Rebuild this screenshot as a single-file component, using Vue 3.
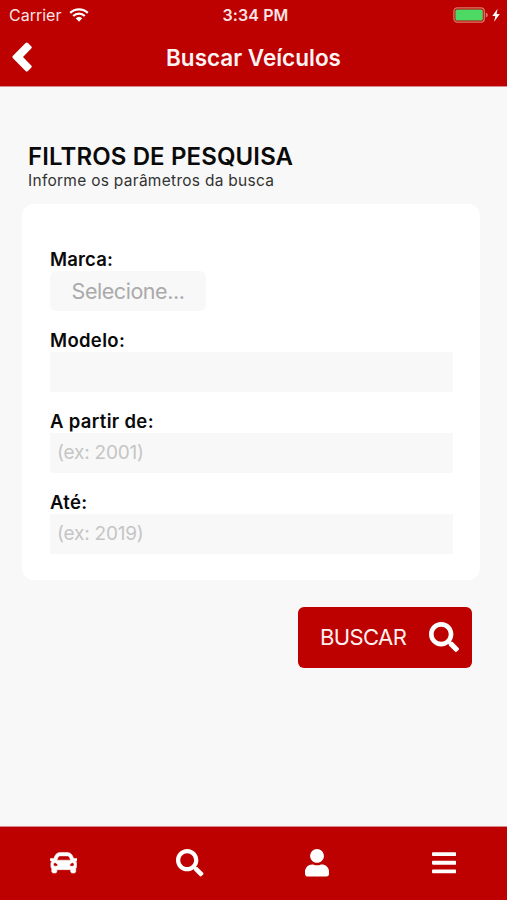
<template>
    <div class="page">
        <div class="status">
            <div class="status-left">
                <span class="carrier">Carrier</span>
                <svg class="wifi" viewBox="0 0 20 14">
                    <path d="M1.2 4.9a12.6 12.6 0 0 1 17.6 0M4.2 8a8.3 8.3 0 0 1 11.6 0" />
                    <path class="wifi-dot" d="M6.7 10.3a4.8 4.8 0 0 1 6.6 0L10 13.7z" />
                </svg>
            </div>
            <div class="clock">3:34 PM</div>
            <div class="status-right">
                <svg class="battery" viewBox="0 0 48 16">
                    <rect class="battery-border" x="0.9" y="0.9" width="30.4" height="14.2" rx="3.4" />
                    <rect class="battery-level" x="2.4" y="2.4" width="27.4" height="11.2" rx="1.6" />
                    <path class="battery-tip" d="M32.8 5.4c2.6 1 2.6 4.2 0 5.2z" />
                    <path class="bolt" d="M44.6 1.7l-5.3 7.4h3l-1.2 5.6 5.7-7.6h-3.2z" />
                </svg>
            </div>
        </div>
        <div class="head">
            <button class="back" aria-label="Voltar">
                <svg viewBox="0 0 20 30">
                    <path d="M2.2 15 14.8 2.2 18 5.4 8.6 15 18 24.6 14.8 27.8z" />
                </svg>
            </button>
            <h1 class="head-title">Buscar Veículos</h1>
        </div>

        <div class="content">
            <h2 class="title">FILTROS DE PESQUISA</h2>
            <div class="subtitle">Informe os parâmetros da busca</div>

            <div class="card">
                <div class="field">
                    <label class="label marca">Marca:</label>
                    <button class="select">Selecione...</button>
                </div>
                <div class="field" v-for="item in fields" :key="item.name">
                    <label :class="`label ${item.name}`" :for="item.name">{{ item.label }}</label>
                    <input class="input" :id="item.name" v-model="filter[item.name]" :placeholder="item.placeholder" />
                </div>
            </div>

            <button class="search">
                <span class="search-text">BUSCAR</span>
                <svg class="search-icon" viewBox="0 0 512 512">
                    <path :d="searchPath" />
                </svg>
            </button>
        </div>

        <div class="tabs">
            <div class="tab" v-for="tab in tabs" :key="tab.name">
                <svg :class="`tab-icon tab-${tab.name}`" :viewBox="tab.box">
                    <path :d="tab.path" />
                </svg>
            </div>
        </div>
    </div>
</template>

<script setup>

import {reactive} from "vue";

const searchPath = "M505 442.7L405.3 343c-4.5-4.5-10.6-7-17-7H372c27.6-35.3 44-79.7 44-128C416 93.1 322.9 0 208 0S0 93.1 0 208s93.1 208 208 208c48.3 0 92.7-16.4 128-44v16.3c0 6.4 2.5 12.5 7 17l99.7 99.7c9.4 9.4 24.6 9.4 33.9 0l28.3-28.3c9.4-9.4 9.4-24.6.1-34zM208 336c-70.7 0-128-57.2-128-128 0-70.7 57.2-128 128-128 70.7 0 128 57.2 128 128 0 70.7-57.2 128-128 128z"

const filter = reactive({
    modelo: "",
    inicio: "",
    fim: ""
})

const fields = [
    {name: "modelo", label: "Modelo:", placeholder: ""},
    {name: "inicio", label: "A partir de:", placeholder: "(ex: 2001)"},
    {name: "fim", label: "Até:", placeholder: "(ex: 2019)"}
]

const tabs = [
    {
        name: "car",
        box: "0 0 512 512",
        path: "M499.99 176h-59.87l-16.64-41.6C406.38 91.63 365.57 64 319.5 64h-127c-46.06 0-86.88 27.63-103.99 70.4L71.87 176H12.01C4.2 176-1.53 183.34.37 190.91l6 24C7.7 220.25 12.5 224 18.01 224h20.07C24.65 235.73 16 252.78 16 272v48c0 16.12 6.16 30.67 16 41.93V416c0 17.67 14.33 32 32 32h32c17.67 0 32-14.33 32-32v-32h256v32c0 17.67 14.33 32 32 32h32c17.67 0 32-14.33 32-32v-54.07c9.84-11.25 16-25.8 16-41.93v-48c0-19.22-8.65-36.27-22.07-48H494c5.51 0 10.31-3.75 11.64-9.09l6-24c1.89-7.57-3.84-14.91-11.65-14.91zm-352.06-17.83c7.29-18.22 24.94-30.17 44.57-30.17h127c19.63 0 37.28 11.95 44.57 30.17L384 208H128l19.93-49.83zM96 319.8c-19.2 0-32-12.76-32-31.9S76.8 256 96 256s48 28.71 48 47.85-28.8 15.95-48 15.95zm320 0c-19.2 0-48 3.19-48-15.95S396.8 256 416 256s32 12.76 32 31.9-12.8 31.9-32 31.9z"
    },
    {name: "search", box: "0 0 512 512", path: searchPath},
    {
        name: "user",
        box: "0 0 448 512",
        path: "M224 256c70.7 0 128-57.3 128-128S294.7 0 224 0 96 57.3 96 128s57.3 128 128 128zm89.6 32h-16.7c-22.2 10.2-46.9 16-72.9 16s-50.6-5.8-72.9-16h-16.7C60.2 288 0 348.2 0 422.4V464c0 26.5 21.5 48 48 48h352c26.5 0 48-21.5 48-48v-41.6c0-74.2-60.2-134.4-134.4-134.4z"
    },
    {
        name: "bars",
        box: "0 0 448 512",
        path: "M16 132h416c8.837 0 16-7.163 16-16V76c0-8.837-7.163-16-16-16H16C7.163 60 0 67.163 0 76v40c0 8.837 7.163 16 16 16zm0 160h416c8.837 0 16-7.163 16-16v-40c0-8.837-7.163-16-16-16H16c-8.837 0-16 7.163-16 16v40c0 8.837 7.163 16 16 16zm0 160h416c8.837 0 16-7.163 16-16v-40c0-8.837-7.163-16-16-16H16c-8.837 0-16 7.163-16 16v40c0 8.837 7.163 16 16 16z"
    }
]
</script>

<style>
body {
    margin: 0;
}
</style>

<style scoped>
.page {
    display: flex;
    flex-direction: column;
    height: 900px;
    background-color: #f8f8f8;
    font-family: Inter, "Liberation Sans", sans-serif;
    color: #0a0a0a;
}
button {
    border: 0;
    padding: 0;
    font-family: inherit;
}
.status {
    display: grid;
    grid-template-columns: 1fr auto 1fr;
    align-items: center;
    height: 30px;
    background-color: #bd0000;
    color: #fbe4e4;
}
.status-left {
    display: flex;
    align-items: center;
    padding-left: 9px;
}
.carrier {
    font-size: 16px;
    line-height: 30px;
}
.wifi {
    width: 20px;
    height: 14px;
    margin-left: 8px;
    fill: none;
    stroke: #fff;
    stroke-width: 2.3;
}
.wifi-dot {
    fill: #fff;
    stroke: none;
}
.clock {
    padding-left: 4px;
    font-size: 16px;
    font-weight: 600;
    letter-spacing: .1px;
    line-height: 30px;
}
.status-right {
    display: flex;
    justify-content: flex-end;
    padding-right: 6px;
}
.battery {
    width: 48px;
    height: 16px;
}
.battery-border {
    fill: none;
    stroke: #d9796c;
    stroke-width: 1.3;
}
.battery-level {
    fill: #4cd964;
}
.battery-tip {
    fill: #d9796c;
}
.bolt {
    fill: #fff;
}
.head {
    display: grid;
    grid-template-columns: 60px 1fr 60px;
    align-items: center;
    height: 56px;
    border-bottom: 1px solid #d98a8a;
    background-color: #bd0000;
}
.back {
    display: flex;
    padding: 0 0 2px 12px;
    background: none;
}
.back svg {
    width: 20px;
    height: 30px;
    fill: #fff;
    stroke: #fff;
    stroke-width: 3.4;
    stroke-linejoin: round;
}
.head-title {
    margin: 0;
    padding-bottom: 1px;
    text-align: center;
    font-size: 22.5px;
    font-weight: 600;
    line-height: 28px;
    color: #fff3f3;
}
.content {
    flex: 1;
    display: flex;
    flex-direction: column;
    padding: 56px 27px 0 22px;
}
.title {
    margin: 0 0 0 6px;
    font-size: 24px;
    font-weight: 600;
    letter-spacing: .12px;
    line-height: 28px;
}
.subtitle {
    margin-left: 6px;
    font-size: 15.5px;
    letter-spacing: .28px;
    line-height: 20px;
    color: #333;
}
.card {
    display: flex;
    flex-direction: column;
    gap: 17px;
    height: 376px;
    margin-top: 13px;
    padding: 43px 27px 0 28px;
    box-sizing: border-box;
    border-radius: 12px;
    background-color: #fff;
}
.field {
    display: flex;
    flex-direction: column;
    align-items: flex-start;
    height: 64px;
}
.label {
    font-size: 18.5px;
    font-weight: 600;
    letter-spacing: .33px;
    line-height: 24px;
}
.marca {
    letter-spacing: .15px;
}
.select {
    width: 156px;
    height: 41px;
    border-radius: 6px;
    background-color: #f8f8f8;
    font-size: 21.5px;
    letter-spacing: -.45px;
    color: #aaa;
}
.input {
    width: 100%;
    height: 40px;
    padding: 0 7px 2px;
    border: 0;
    outline: 0;
    box-sizing: border-box;
    background-color: #f8f8f8;
    font-family: inherit;
    font-size: 19px;
    letter-spacing: -.2px;
    color: #0a0a0a;
}
.input::placeholder {
    color: #c5c5c5;
}
.search {
    align-self: flex-end;
    display: flex;
    align-items: center;
    justify-content: space-between;
    width: 174px;
    height: 61px;
    margin: 27px 8px 0 0;
    padding: 0 13px 1px 22px;
    box-sizing: border-box;
    border-radius: 6px;
    background-color: #bd0000;
    color: #fff0f0;
}
.search-text {
    font-size: 22px;
    letter-spacing: -.6px;
}
.search-icon {
    width: 30px;
    height: 30px;
    fill: #fff;
}
.tabs {
    display: grid;
    grid-template-columns: repeat(4, 1fr);
    height: 73px;
    border-top: 1px solid #d98a8a;
    background-color: #bd0000;
}
.tab {
    display: flex;
    align-items: center;
    justify-content: center;
}
.tab-icon {
    height: 27.5px;
    margin-bottom: 1px;
    fill: #fff;
}
.tab-car {
    stroke: #fff;
    stroke-width: 10;
}
</style>
